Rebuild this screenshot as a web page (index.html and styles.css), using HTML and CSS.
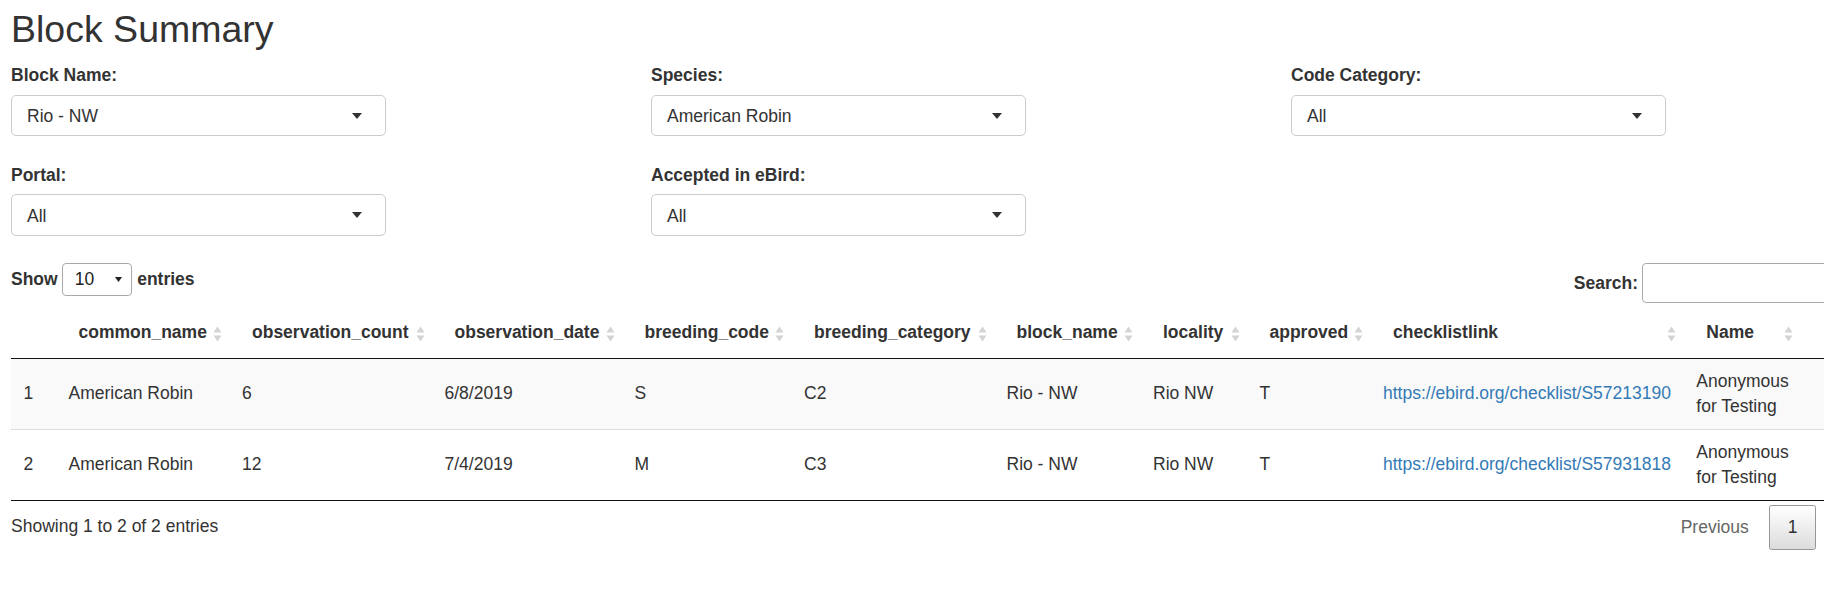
FILE: index.html
```html
<!DOCTYPE html>
<html lang="en">
<head>
<meta charset="utf-8">
<title>Block Summary</title>
<link rel="stylesheet" href="styles.css">
</head>
<body>
<div class="page">
  <h2 class="title">Block Summary</h2>

  <div class="filters">
    <div class="field">
      <label class="field-label">Block Name:</label>
      <div class="selectize">Rio - NW<span class="caret"></span></div>
    </div>
    <div class="field">
      <label class="field-label">Species:</label>
      <div class="selectize">American Robin<span class="caret"></span></div>
    </div>
    <div class="field">
      <label class="field-label">Code Category:</label>
      <div class="selectize">All<span class="caret"></span></div>
    </div>
    <div class="field">
      <label class="field-label">Portal:</label>
      <div class="selectize">All<span class="caret"></span></div>
    </div>
    <div class="field">
      <label class="field-label">Accepted in eBird:</label>
      <div class="selectize">All<span class="caret"></span></div>
    </div>
  </div>

  <div class="dt-wrapper">
    <div class="dt-top">
      <div class="dt-length">
        <span>Show</span>
        <div class="len-select">10<svg class="len-arrow" width="7" height="5" viewBox="0 0 7 5"><path d="M0 0 L7 0 L3.5 5 Z" fill="#222"/></svg></div>
        <span>entries</span>
      </div>
      <div class="dt-search">
        <label class="search-label" for="q">Search:</label>
        <input id="q" class="search-input" type="search">
      </div>
    </div>

    <table class="dt-table">
      <colgroup>
        <col class="c-idx"><col class="c-common"><col class="c-count"><col class="c-date"><col class="c-code"><col class="c-cat"><col class="c-block"><col class="c-loc"><col class="c-appr"><col class="c-link"><col class="c-name"><col class="c-rest">
      </colgroup>
      <thead>
        <tr>
          <th class="th-idx"></th>
          <th>common_name<svg class="sort" width="9" height="16" viewBox="0 0 9 16"><path d="M0.5 6.5 L4.5 0.5 L8.5 6.5 Z M0.5 9.5 L8.5 9.5 L4.5 15.5 Z" fill="#d4d4d4"/></svg></th>
          <th>observation_count<svg class="sort" width="9" height="16" viewBox="0 0 9 16"><path d="M0.5 6.5 L4.5 0.5 L8.5 6.5 Z M0.5 9.5 L8.5 9.5 L4.5 15.5 Z" fill="#d4d4d4"/></svg></th>
          <th>observation_date<svg class="sort" width="9" height="16" viewBox="0 0 9 16"><path d="M0.5 6.5 L4.5 0.5 L8.5 6.5 Z M0.5 9.5 L8.5 9.5 L4.5 15.5 Z" fill="#d4d4d4"/></svg></th>
          <th>breeding_code<svg class="sort" width="9" height="16" viewBox="0 0 9 16"><path d="M0.5 6.5 L4.5 0.5 L8.5 6.5 Z M0.5 9.5 L8.5 9.5 L4.5 15.5 Z" fill="#d4d4d4"/></svg></th>
          <th>breeding_category<svg class="sort" width="9" height="16" viewBox="0 0 9 16"><path d="M0.5 6.5 L4.5 0.5 L8.5 6.5 Z M0.5 9.5 L8.5 9.5 L4.5 15.5 Z" fill="#d4d4d4"/></svg></th>
          <th>block_name<svg class="sort" width="9" height="16" viewBox="0 0 9 16"><path d="M0.5 6.5 L4.5 0.5 L8.5 6.5 Z M0.5 9.5 L8.5 9.5 L4.5 15.5 Z" fill="#d4d4d4"/></svg></th>
          <th>locality<svg class="sort" width="9" height="16" viewBox="0 0 9 16"><path d="M0.5 6.5 L4.5 0.5 L8.5 6.5 Z M0.5 9.5 L8.5 9.5 L4.5 15.5 Z" fill="#d4d4d4"/></svg></th>
          <th>approved<svg class="sort" width="9" height="16" viewBox="0 0 9 16"><path d="M0.5 6.5 L4.5 0.5 L8.5 6.5 Z M0.5 9.5 L8.5 9.5 L4.5 15.5 Z" fill="#d4d4d4"/></svg></th>
          <th>checklistlink<svg class="sort" width="9" height="16" viewBox="0 0 9 16"><path d="M0.5 6.5 L4.5 0.5 L8.5 6.5 Z M0.5 9.5 L8.5 9.5 L4.5 15.5 Z" fill="#d4d4d4"/></svg></th>
          <th>Name<svg class="sort" width="9" height="16" viewBox="0 0 9 16"><path d="M0.5 6.5 L4.5 0.5 L8.5 6.5 Z M0.5 9.5 L8.5 9.5 L4.5 15.5 Z" fill="#d4d4d4"/></svg></th>
          <th></th>
        </tr>
      </thead>
      <tbody>
        <tr class="odd">
          <td>1</td>
          <td>American Robin</td>
          <td>6</td>
          <td>6/8/2019</td>
          <td>S</td>
          <td>C2</td>
          <td>Rio - NW</td>
          <td>Rio NW</td>
          <td>T</td>
          <td><a class="link" href="#">https://ebird.org/checklist/S57213190</a></td>
          <td>Anonymous for Testing</td>
          <td></td>
        </tr>
        <tr class="even">
          <td>2</td>
          <td>American Robin</td>
          <td>12</td>
          <td>7/4/2019</td>
          <td>M</td>
          <td>C3</td>
          <td>Rio - NW</td>
          <td>Rio NW</td>
          <td>T</td>
          <td><a class="link" href="#">https://ebird.org/checklist/S57931818</a></td>
          <td>Anonymous for Testing</td>
          <td></td>
        </tr>
      </tbody>
    </table>

    <div class="dt-bottom">
      <div class="dt-info">Showing 1 to 2 of 2 entries</div>
      <div class="dt-paginate">
        <span class="pbtn disabled">Previous</span><span class="pbtn current">1</span>
      </div>
    </div>
  </div>
</div>
</body>
</html>
```

FILE: styles.css
```css
html, body {
  margin: 0;
  padding: 0;
  background: #fff;
}

body {
  overflow: hidden;
  font-family: "Liberation Sans", Arial, Helvetica, sans-serif;
  font-size: 17.5px;
  line-height: 25px;
  color: #333;
}

.page {
  box-sizing: border-box;
  width: 1891px;
  padding: 9px 0 0 11px;
}

.title {
  margin: 0;
  font-size: 37.5px;
  line-height: 41.25px;
  font-weight: 400;
  color: #333;
}

/* ---------- filters ---------- */
.filters {
  margin-top: 13px;
  display: grid;
  grid-template-columns: repeat(3, 640px);
  row-gap: 27px;
}

.field-label {
  display: block;
  font-weight: 700;
  line-height: 25px;
  margin-bottom: 6.25px;
}

.selectize {
  position: relative;
  box-sizing: border-box;
  width: 375px;
  height: 41.5px;
  padding: 8.5px 15px 6px;
  border: 1px solid #ccc;
  border-radius: 5px;
  background: #fff;
  line-height: 25px;
  color: #333;
}

.caret {
  position: absolute;
  right: 23px;
  top: 17px;
  width: 0;
  height: 0;
  border-style: solid;
  border-width: 6px 5.5px 0 5.5px;
  border-color: #333 transparent transparent transparent;
}

/* ---------- datatable controls ---------- */
.dt-wrapper {
  margin-top: 27.5px;
}

.dt-top {
  display: flex;
  justify-content: space-between;
  align-items: flex-start;
}

.dt-length {
  display: flex;
  align-items: center;
  height: 33px;
  font-weight: 700;
}

.len-select {
  position: relative;
  box-sizing: border-box;
  width: 69.5px;
  height: 33px;
  margin: 0 5.5px 0 4.5px;
  padding: 0 0 0 11.5px;
  border: 1px solid #aaa;
  border-radius: 4px;
  font-weight: 400;
  line-height: 31px;
  color: #222;
}

.len-arrow {
  position: absolute;
  right: 9px;
  top: 13px;
}

.dt-search {
  display: flex;
  align-items: center;
  height: 39.5px;
}

.search-label {
  font-weight: 700;
}

.search-input {
  box-sizing: border-box;
  width: 249px;
  height: 39.5px;
  margin: 0 0 0 4px;
  padding: 6px;
  border: 1px solid #aaa;
  border-radius: 4px;
  background: transparent;
  font: inherit;
  outline: none;
}

/* ---------- table ---------- */
.dt-table {
  margin-top: 5.2px;
  width: 1880px;
  table-layout: fixed;
  border-collapse: separate;
  border-spacing: 0;
  border-bottom: 1px solid #111;
}

.c-idx { width: 45px; }
.c-common { width: 173.5px; }
.c-count { width: 202.5px; }
.c-date { width: 190px; }
.c-code { width: 169.5px; }
.c-cat { width: 202.5px; }
.c-block { width: 146.5px; }
.c-loc { width: 106.5px; }
.c-appr { width: 123.5px; }
.c-link { width: 313.3px; }
.c-name { width: 117px; }
.c-rest { width: 90.2px; }

.dt-table th {
  position: relative;
  padding: 12.5px 22.5px;
  border-bottom: 1px solid #111;
  text-align: left;
  font-weight: 700;
  white-space: nowrap;
  line-height: 25px;
}

.sort {
  position: absolute;
  right: 7.5px;
  top: 18.5px;
}

.dt-table td {
  padding: 10px 12.5px;
  line-height: 25px;
  vertical-align: middle;
  border-top: 1px solid #ddd;
}

.dt-table tbody tr:first-child td {
  border-top: none;
}

.dt-table tr.odd {
  background: #f9f9f9;
}

.dt-table tr.even {
  background: #fff;
}

.link {
  color: #337ab7;
  text-decoration: none;
  white-space: nowrap;
}

/* ---------- bottom ---------- */
.dt-bottom {
  display: flex;
  justify-content: space-between;
  align-items: flex-start;
}

.dt-info {
  padding-top: 13.2px;
}

.dt-paginate {
  display: flex;
  padding-top: 4.4px;
  margin-right: 75px;
}

.pbtn {
  box-sizing: border-box;
  min-width: 26.25px;
  padding: 8.75px 17.5px;
  margin-left: 2px;
  border: 1px solid transparent;
  border-radius: 2.5px;
  text-align: center;
  line-height: 25px;
  color: #333;
}

.pbtn.disabled {
  color: #666;
}

.pbtn.current {
  border: 1px solid #979797;
  background: linear-gradient(to bottom, #fff 0%, #dcdcdc 100%);
  color: #333;
}
```
